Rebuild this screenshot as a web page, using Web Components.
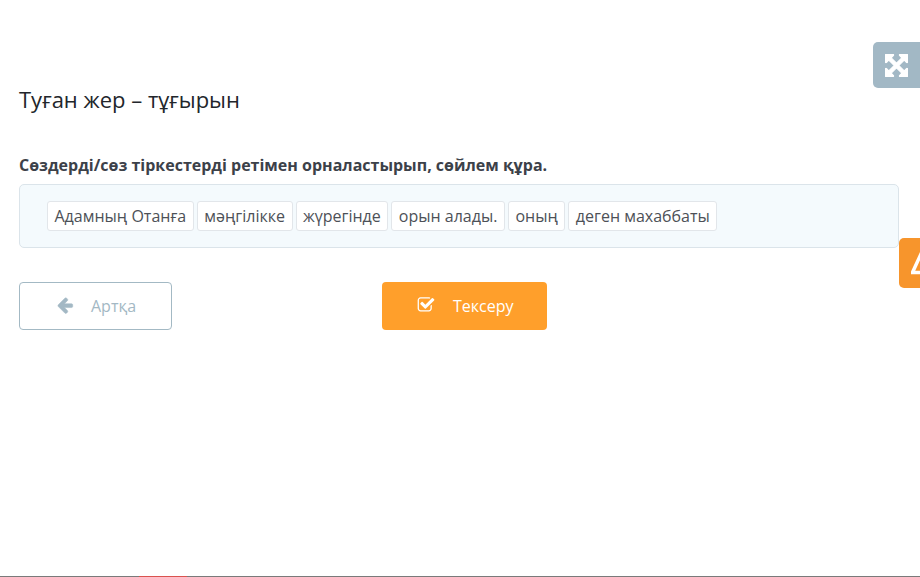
<!DOCTYPE html>
<html lang="kk">
<head>
<meta charset="utf-8">
<title>Туған жер – тұғырын</title>
<style>
  html, body { margin: 0; height: 100%; background: #fff; }
  body { font-family: "Open Sans", "Noto Sans", sans-serif; color: #3c4149; overflow: hidden; }
</style>
</head>
<body>
<quiz-page>
  <quiz-title slot="title">Туған жер – тұғырын</quiz-title>
  <quiz-prompt slot="prompt">Сөздерді/сөз тіркестерді ретімен орналастырып, сөйлем құра.</quiz-prompt>
  <word-bank slot="bank">
    <word-chip>Адамның Отанға</word-chip>
    <word-chip>мәңгілікке</word-chip>
    <word-chip>жүрегінде</word-chip>
    <word-chip>орын алады.</word-chip>
    <word-chip>оның</word-chip>
    <word-chip>деген махаббаты</word-chip>
  </word-bank>
  <quiz-button slot="back" variant="back" icon="back">Артқа</quiz-button>
  <quiz-button slot="check" variant="check" icon="check">Тексеру</quiz-button>
</quiz-page>
<side-tabs></side-tabs>
<progress-line></progress-line>

<script>
const pageTemplate = document.createElement('template');
pageTemplate.innerHTML = `
<style>
  :host { display: block; padding: 83px 21px 0 19px; box-sizing: border-box; }
  .actions { display: flex; margin-top: 34px; }
  .actions ::slotted([slot="back"]) { margin-right: 210px; }
</style>
<slot name="title"></slot>
<slot name="prompt"></slot>
<slot name="bank"></slot>
<div class="actions">
  <slot name="back"></slot>
  <slot name="check"></slot>
</div>
`;

class QuizPage extends HTMLElement {
  constructor() {
    super();
    this._root = this.attachShadow({ mode: 'open' });
    this._root.appendChild(pageTemplate.content.cloneNode(true));
  }
}

class QuizTitle extends HTMLElement {
  constructor() {
    super();
    this.attachShadow({ mode: 'open' }).innerHTML = `
<style>
  :host { display: block; font-size: 22px; line-height: 32px; color: #22262b; margin-bottom: 33px; }
</style>
<slot></slot>`;
  }
}

class QuizPrompt extends HTMLElement {
  constructor() {
    super();
    this.attachShadow({ mode: 'open' }).innerHTML = `
<style>
  :host { display: block; font-size: 16px; line-height: 35px; font-weight: 700; color: #3c4149; margin-bottom: 1px; }
</style>
<slot></slot>`;
  }
}

class WordBank extends HTMLElement {
  constructor() {
    super();
    this.attachShadow({ mode: 'open' }).innerHTML = `
<style>
  :host {
    display: flex; gap: 3px; box-sizing: border-box; height: 64px;
    padding: 16px 27px 0; background: #f4fafd;
    border: 1px solid #dbe4ea; border-radius: 5px;
  }
</style>
<slot></slot>`;
  }
}

class WordChip extends HTMLElement {
  constructor() {
    super();
    this.attachShadow({ mode: 'open' }).innerHTML = `
<style>
  :host {
    display: block; box-sizing: border-box; height: 30px; padding: 0 6.5px;
    font-size: 16px; line-height: 28px; color: #4d5157; white-space: nowrap;
    background: #fff; border: 1px solid #e2e6ea; border-radius: 3px;
  }
</style>
<slot></slot>`;
  }
}

const icons = {
  back: `<svg width="18" height="18" viewBox="0 0 1792 1792" fill="currentColor" stroke="currentColor" stroke-width="50"><path d="M1664 896v128q0 53-32.5 90.5t-84.5 37.5h-704l293 294q38 36 38 90t-38 90l-75 76q-38 38-90 38-53 0-91-38l-651-652q-37-37-37-90 0-52 37-91l651-650q38-38 91-38 52 0 90 38l75 74q38 38 38 91t-38 91l-293 293h704q52 0 84.5 37.5t32.5 90.5z"/></svg>`,
  check: `<svg width="18" height="18" viewBox="0 0 1792 1792" fill="currentColor"><path d="M1472 930v318q0 119-84.5 203.5t-203.5 84.5h-832q-119 0-203.5-84.5t-84.5-203.5v-832q0-119 84.5-203.5t203.5-84.5h832q63 0 117 25 15 7 18 23 3 17-9 29l-49 49q-10 10-23 10-3 0-9-2-23-6-45-6h-832q-66 0-113 47t-47 113v832q0 66 47 113t113 47h832q66 0 113-47t47-113v-254q0-13 9-22l64-64q10-10 23-10 6 0 12 3 20 8 20 29zm231-489l-814 814q-24 24-57 24t-57-24l-430-430q-24-24-24-57t24-57l110-110q24-24 57-24t57 24l263 263 647-647q24-24 57-24t57 24l110 110q24 24 24 57t-24 57z"/></svg>`,
};

class QuizButton extends HTMLElement {
  constructor() {
    super();
    this.attachShadow({ mode: 'open' }).innerHTML = `
<style>
  :host {
    display: flex; align-items: center; box-sizing: border-box; height: 48px;
    font-size: 16px; border-radius: 4px; cursor: pointer;
  }
  :host([variant="back"]) {
    width: 153px; padding-left: 36px; gap: 17px;
    color: #a3b8c4; background: #fff; border: 1px solid #a3b9c4;
  }
  :host([variant="check"]) {
    width: 165px; padding-left: 35px; gap: 18px;
    color: #fff; background: #ff9f2b;
  }
  svg, .icon { display: block; }
  .icon { margin-top: -2px; }
</style>
<span class="icon"></span>
<slot></slot>`;
  }

  connectedCallback() {
    this.shadowRoot.querySelector('.icon').innerHTML = icons[this.getAttribute('icon')] || '';
  }
}

class SideTabs extends HTMLElement {
  constructor() {
    super();
    this.attachShadow({ mode: 'open' }).innerHTML = `
<style>
  .tab { position: absolute; right: 0; box-sizing: border-box; border-radius: 5px 0 0 5px; overflow: hidden; }
  .expand { top: 42px; width: 47px; height: 46px; background: #a2b8c5; display: flex; align-items: center; justify-content: center; color: #fff; }
  .note { top: 238px; width: 21px; height: 50px; background: #f7952c; }
  .note svg { position: absolute; left: 12px; top: 14px; }
</style>
<div class="tab expand">
  <svg width="23" height="23" viewBox="128 128 1536 1536" fill="currentColor" stroke="currentColor" stroke-width="70"><path d="M1411 541l-355 355 355 355 144-144q29-31 70-14 39 17 39 59v448q0 26-19 45t-45 19h-448q-42 0-59-40-17-39 14-69l144-144-355-355-355 355 144 144q31 30 14 69-17 40-59 40h-448q-26 0-45-19t-19-45v-448q0-42 40-59 39-17 69 14l144 144 355-355-355-355-144 144q-19 19-45 19-12 0-24-5-40-17-40-59v-448q0-26 19-45t45-19h448q42 0 59 40 17 39-14 69l-144 144 355 355 355-355-144-144q-31-30-14-69 17-40 59-40h448q26 0 45 19t19 45v448q0 42-39 59-13 5-25 5-26 0-45-19z"/></svg>
</div>
<div class="tab note">
  <svg width="24" height="24" viewBox="0 0 24 24" fill="none" stroke="#fff" stroke-width="3.5"><path d="M10 2L1.5 20.5h17z"/></svg>
</div>`;
  }
}

class ProgressLine extends HTMLElement {
  constructor() {
    super();
    this.attachShadow({ mode: 'open' }).innerHTML = `
<style>
  :host { position: absolute; left: 0; right: 0; bottom: 0; height: 1px; background: #7a7a7a; }
  div { position: absolute; left: 139px; width: 48px; height: 1px; background: #d9534f; }
</style>
<div></div>`;
  }
}

window.customElements.define('quiz-page', QuizPage);
window.customElements.define('quiz-title', QuizTitle);
window.customElements.define('quiz-prompt', QuizPrompt);
window.customElements.define('word-bank', WordBank);
window.customElements.define('word-chip', WordChip);
window.customElements.define('quiz-button', QuizButton);
window.customElements.define('side-tabs', SideTabs);
window.customElements.define('progress-line', ProgressLine);
</script>
</body>
</html>
